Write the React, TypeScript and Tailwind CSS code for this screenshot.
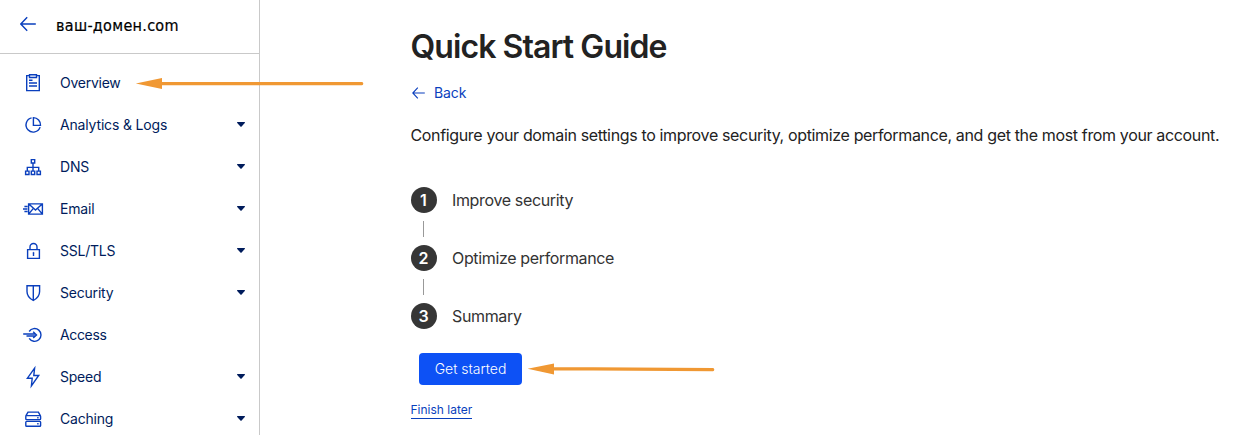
import type { ReactNode } from "react";

type NavItem = { label: string; icon: ReactNode; expandable: boolean; spacing: string };

function Icon({ children }: { children: ReactNode }) {
  return (
    <svg width="24" height="24" viewBox="0 0 24 24" fill="none" stroke="currentColor" strokeWidth="1.4" className="shrink-0 text-[#0a3fbd]">
      {children}
    </svg>
  );
}

const items: NavItem[] = [
  {
    label: "Overview",
    expandable: false,
    spacing: "tracking-[-0.25px]",
    icon: (
      <Icon>
        <path d="M8.5 4.6H5.7v15h12.6v-15h-2.8M8.5 3.7h7v2.8h-7zM8 9.3h3.5M8 12h8M8 15h8" />
      </Icon>
    ),
  },
  {
    label: "Analytics & Logs",
    expandable: true,
    spacing: "tracking-[-0.17px]",
    icon: (
      <Icon>
        <path d="M10.6 4.9a7.2 7.2 0 1 0 8.5 9.2M12.4 4.6v7.8h7.1a7.3 7.3 0 0 0-7.1-7.8z" />
      </Icon>
    ),
  },
  {
    label: "DNS",
    expandable: true,
    spacing: "tracking-[-0.15px]",
    icon: (
      <Icon>
        <path d="M10.3 4.6h3.4V8h-3.4zM4.6 16.1H8v3.4H4.6zM10.3 16.1h3.4v3.4h-3.4zM16 16.1h3.4v3.4H16zM12 8v8M6.3 16v-3.6h11.4V16" />
      </Icon>
    ),
  },
  {
    label: "Email",
    expandable: true,
    spacing: "tracking-[-0.2px]",
    icon: (
      <Icon>
        <path d="M7.6 6.9h13.8v10.2H7.6zM7.8 7.1l6.7 6 6.7-6M7.8 16.9l4.4-5.3M21.2 16.9l-4.4-5.3M3.4 9.5h3.2M2 12h4.4M3.4 14.5h3.2" />
      </Icon>
    ),
  },
  {
    label: "SSL/TLS",
    expandable: true,
    spacing: "tracking-[-0.25px]",
    icon: (
      <Icon>
        <path d="M6.6 10.6h11.8v8.8H6.6zM9 10.5V8a3.5 3.5 0 0 1 7 0v2.5M12.5 14v3" />
        <circle cx="12.5" cy="13.9" r="0.5" fill="currentColor" strokeWidth="1" />
      </Icon>
    ),
  },
  {
    label: "Security",
    expandable: true,
    spacing: "tracking-[-0.2px]",
    icon: (
      <Icon>
        <path d="M6 4.7h12.6v5.8c0 4.2-2.4 6.9-6.3 9-3.9-2.1-6.3-4.8-6.3-9zM12.3 4.7v14.6" />
      </Icon>
    ),
  },
  {
    label: "Access",
    expandable: false,
    spacing: "tracking-[-0.35px]",
    icon: (
      <Icon>
        <path d="M8.2 8.5a6.4 6.4 0 1 1 0 6.9M2.2 11h12.6M5.5 13h9.6M12.2 8.8l3.3 3.1-3.3 3.2" />
      </Icon>
    ),
  },
  {
    label: "Speed",
    expandable: true,
    spacing: "tracking-[-0.25px]",
    icon: (
      <Icon>
        <path d="M13.6 3.2 6.4 13.2h4.8l-.8 7.6 7.3-10.3h-4.9z" />
      </Icon>
    ),
  },
  {
    label: "Caching",
    expandable: true,
    spacing: "tracking-[-0.2px]",
    icon: (
      <Icon>
        <path d="M4.7 9.2 7 5.1h10.4l2.2 4.1M5.6 8.6h13.2q.8 0 .8.8v2.4q0 .8-.8.8H5.6q-.8 0-.8-.8V9.4q0-.8.8-.8zM5.6 14.4h13.2q.8 0 .8.8v3.2q0 .8-.8.8H5.6q-.8 0-.8-.8v-3.2q0-.8.8-.8zM16.2 10.7h1.4M16.2 16.8h1.4" />
      </Icon>
    ),
  },
];

const steps = ["Improve security", "Optimize performance", "Summary"];

function Sidebar() {
  return (
    <aside className="flex w-[260px] shrink-0 flex-col border-r border-[#c9c9c9]">
      <header className="flex h-[54px] shrink-0 items-center border-b border-[#c9c9c9] pl-5">
        <svg width="16" height="16" viewBox="0 0 16 16" fill="none" stroke="#0a3fbd" strokeWidth="1.4" className="mb-[5px]">
          <path d="M7.2 1.2.8 8l6.4 6.8M.8 8h15" />
        </svg>
        <span className="mb-0.5 ml-5 whitespace-nowrap font-['DejaVu_Sans_Condensed','DejaVu_Sans',sans-serif] text-[16px] leading-5 tracking-[0.3px] text-black [-webkit-text-stroke:0.2px_black]">ваш-домен.com</span>
      </header>
      <nav className="flex flex-col pt-2">
        {items.map((item) => (
          <a key={item.label} className="flex h-[42px] shrink-0 items-center pl-[21px] pr-[14px] text-[#001c5c]">
            {item.icon}
            <span className={`ml-[15px] flex-1 text-sm ${item.spacing}`}>{item.label}</span>
            {item.expandable && (
              <svg width="8" height="5" viewBox="0 0 9 5" preserveAspectRatio="none" fill="currentColor" className="mb-px">
                <path d="M.3 0h8.4q.4.4 0 .9L5.2 4.5q-.7.6-1.4 0L.3.9Q-.1.4.3 0z" />
              </svg>
            )}
          </a>
        ))}
      </nav>
    </aside>
  );
}

export default function App() {
  return (
    <div className="relative flex h-[435px] w-[1233px] overflow-hidden bg-white font-['Inter',sans-serif] text-[#222]">
      <Sidebar />
      <main className="flex flex-1 flex-col items-start pl-[150.5px] pt-[27px]">
        <h1 className="whitespace-nowrap text-[32px] font-semibold leading-10 tracking-[-0.92px]">Quick Start Guide</h1>
        <a className="mt-4 flex h-5 items-center text-sm text-[#0a3fbd]">
          <svg width="13" height="12" viewBox="0 0 13 12" fill="none" stroke="currentColor" strokeWidth="1.1" className="ml-[1.5px]">
            <path d="M5.8.7.8 6l5 5.3M.8 6h12" />
          </svg>
          <span className="ml-[9px] tracking-[-0.1px]">Back</span>
        </a>
        <p className="mt-5 whitespace-nowrap text-base leading-6 tracking-[-0.35px]">
          Configure your domain settings to improve security, optimize performance, and get the most from your account.
        </p>
        <ol className="ml-[0.5px] mt-10 flex flex-col">
          {steps.map((step, i) => (
            <li key={step} className="flex flex-col">
              <div className="flex h-[26px] items-center">
                <span className="flex size-[26px] items-center justify-center rounded-full bg-[#363636] pr-px text-base font-semibold text-white">{i + 1}</span>
                <span className="ml-[15px] text-base tracking-[-0.35px] text-[#333]">{step}</span>
              </div>
              {i < steps.length - 1 && <span className="my-2 ml-3 h-4 w-px bg-[#999]" />}
            </li>
          ))}
        </ol>
        <button className="ml-[8.5px] mt-6 h-8 w-[103px] rounded-[4px] bg-[#0d51f5] text-sm font-light text-white">Get started</button>
        <a className="mt-[17px] whitespace-nowrap border-b border-[#0a3fbd] text-xs leading-4 text-[#0a3fbd]">Finish later</a>
      </main>
      <svg width="230" height="14" viewBox="0 0 230 14" className="absolute left-[135px] top-[77px]" fill="#f09833">
        <path d="M.8 6.5 27 .9v11zM26 5h201q1.3 0 1.3 1.6T227 8.3H26z" />
      </svg>
      <svg width="190" height="14" viewBox="0 0 190 14" className="absolute left-[527px] top-[362px]" fill="#f09833">
        <path d="M.6 6.7 27 1.5v11zM26 5l160 1q1.3 0 1.3 1.6T186 9.2L26 8.2z" />
      </svg>
    </div>
  );
}
